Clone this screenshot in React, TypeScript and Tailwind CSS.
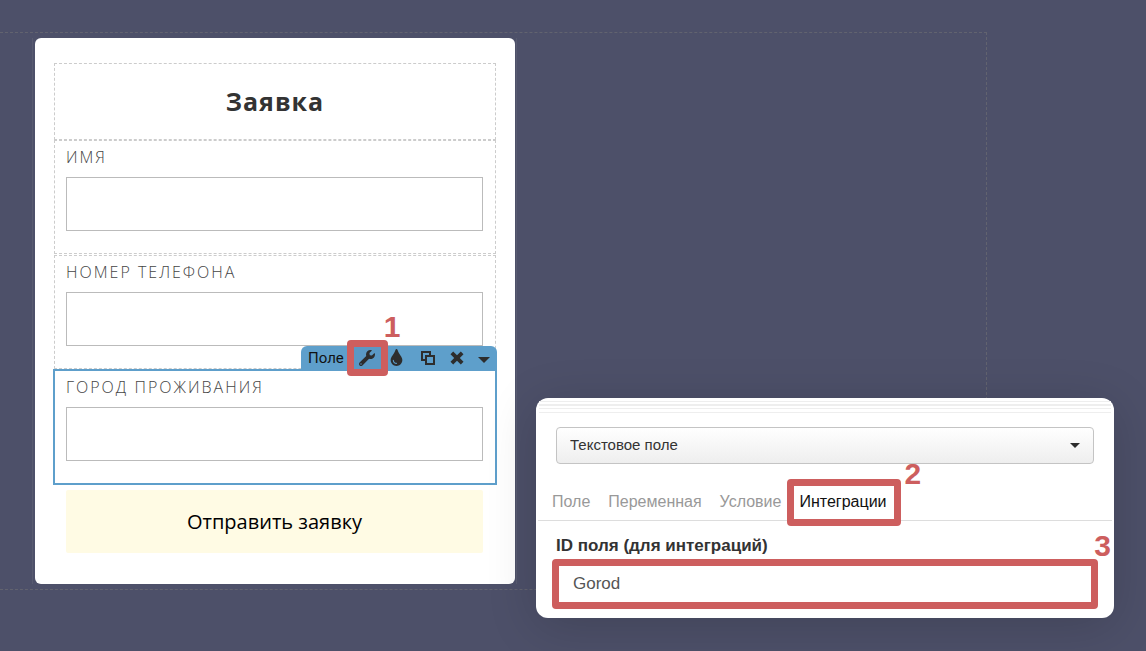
import React from "react";
import { FaTint, FaWrench } from "react-icons/fa";

interface HighlightProps {
  step: number;
  frame: string;
  badge: string;
}

// Red frame with a step number next to it, always laid over its relative parent
function Highlight({ step, frame, badge }: HighlightProps) {
  return (
    <>
      <span className={`pointer-events-none absolute rounded-sm border-[7px] border-[#cd5e5e] ${frame}`} />
      <span className={`pointer-events-none absolute font-['Liberation_Sans',Arial,sans-serif] text-[30px] leading-[30px] font-bold text-[#cd5e5e] ${badge}`}>
        {step}
      </span>
    </>
  );
}

interface FormFieldProps {
  id: string;
  label: string;
}

function FormField({ id, label }: FormFieldProps) {
  return (
    <>
      <label htmlFor={id} className="block pt-[5px] pb-[9px] text-base leading-[22px] font-light tracking-[2px] text-[#444] uppercase">
        {label}
      </label>
      <input id={id} type="text" className="block h-[54px] w-full border border-[#bbb] bg-white px-3 outline-none" />
    </>
  );
}

function Caret({ className }: { className: string }) {
  return (
    <svg viewBox="0 0 12 6" className={className} aria-hidden="true">
      <path d="M0 0h12L6 6z" fill="currentColor" />
    </svg>
  );
}

function CopyIcon() {
  return (
    <svg width="16" height="16" viewBox="0 0 16 16" fill="none" stroke="currentColor" strokeWidth="2" aria-hidden="true">
      <path d="M5 10H2V2h8v3" />
      <path d="M6 6h8v8H6z" />
    </svg>
  );
}

function CrossIcon() {
  return (
    <svg width="14" height="14" viewBox="0 0 14 14" fill="currentColor" aria-hidden="true">
      <path d="M3.2 0.6 7 4.2l3.8-3.6 2.7 2.6L9.8 7l3.7 3.8-2.7 2.6L7 9.8l-3.8 3.6-2.7-2.6L4.2 7 .5 3.2z" />
    </svg>
  );
}

function FieldToolbar() {
  return (
    <div className="absolute -right-0.5 bottom-full flex h-[25px] w-49 items-center rounded-t-md bg-[#5e9fcb] pb-0.5 pl-[7px] text-[#2d2d2d]">
      <span className="font-[Roboto,sans-serif] text-[15px] leading-6 text-[#111]">Поле</span>
      <div className="relative ml-[3px] flex h-6 w-[41px] items-center justify-center">
        <button type="button" aria-label="Настройки" className="flex h-6 w-7 items-center justify-center bg-[#5a98c4]">
          <FaWrench size={16} />
        </button>
        <Highlight step={1} frame="-inset-y-1.5 inset-x-0" badge="-top-[34px] left-[37px]" />
      </div>
      <button type="button" aria-label="Цвет" className="flex w-[18px] justify-center">
        <FaTint size={17} />
      </button>
      <button type="button" aria-label="Копировать" className="ml-3.5">
        <CopyIcon />
      </button>
      <button type="button" aria-label="Удалить" className="ml-3.5">
        <CrossIcon />
      </button>
      <button type="button" aria-label="Ещё" className="mt-1 ml-3.5">
        <Caret className="h-1.5 w-3" />
      </button>
    </div>
  );
}

function RequestForm() {
  return (
    <form className="w-120 rounded-md bg-white px-[19px] pt-[25px] pb-[31px] font-['Open_Sans',sans-serif]">
      <div className="border border-dashed border-[#ccc] py-5 text-center">
        <h1 className="text-[25px] leading-[35px] font-bold tracking-[1px] text-[#333]">Заявка</h1>
      </div>
      <div className="mb-px border border-dashed border-[#ccc] pr-3 pb-[22px] pl-[11px]">
        <FormField id="name" label="Имя" />
      </div>
      <div className="border border-dashed border-[#ccc] pr-3 pb-[22px] pl-[11px]">
        <FormField id="phone" label="Номер телефона" />
      </div>
      <div className="relative -mx-px border-2 border-[#5e9fcb] pr-3 pb-[22px] pl-[11px]">
        <FieldToolbar />
        <FormField id="city" label="Город проживания" />
      </div>
      <button type="button" className="mt-[5px] ml-3 block h-[63px] w-[417px] rounded-xs bg-[#fffbe4] text-xl text-black">
        Отправить заявку
      </button>
    </form>
  );
}

const tabs = ["Поле", "Переменная", "Условие", "Интеграции"];

function SettingsPanel() {
  return (
    <aside className="absolute top-[398px] right-8 w-[578px] rounded-xl bg-white pb-[9px] font-['Liberation_Sans',Arial,sans-serif] shadow-[0_8px_50px_rgba(0,0,0,0.16)]">
      {/* drag handle */}
      <div className="mx-[3px] flex cursor-move flex-col pt-[3px]">
        <div className="h-px bg-[#eee]" />
        <div className="mt-0.5 h-0.5 bg-[#eee]" />
        <div className="mt-0.5 h-px bg-[#eee]" />
        <div className="mt-[3px] h-px bg-[#eee]" />
      </div>

      <div className="relative mx-5 mt-3.5">
        <select
          aria-label="Тип поля"
          className="block h-[37px] w-full appearance-none rounded-sm border border-[#c4c4c4] bg-linear-to-b from-white to-[#eee] px-[13px] text-[15px] text-[#333]"
        >
          <option>Текстовое поле</option>
        </select>
        <Caret className="pointer-events-none absolute top-4 right-3.5 h-[5px] w-2.5 text-[#2d2d2d]" />
      </div>

      <div role="tablist" className="mx-0.5 mt-[15px] flex h-[42px] gap-[18px] border-b border-[#ddd] pl-3.5 text-base">
        {tabs.map((tab) =>
          tab === "Интеграции" ? (
            <div key={tab} className="relative flex">
              <button type="button" role="tab" aria-selected="true" className="pt-1 text-[#111]">
                {tab}
              </button>
              <Highlight step={2} frame="-left-3 -right-3.5 top-0 -bottom-1.5" badge="-top-5 left-full ml-[18px]" />
            </div>
          ) : (
            <button key={tab} type="button" role="tab" aria-selected="false" className="pt-1 text-[#999]">
              {tab}
            </button>
          )
        )}
      </div>

      <div className="px-4 pt-[13px]">
        <label htmlFor="integration-id" className="ml-1 block text-[17px] leading-6 font-bold text-[#333]">
          ID поля (для интеграций)
        </label>
        <div className="relative mt-px">
          <input
            id="integration-id"
            type="text"
            defaultValue="Gorod"
            className="block h-[50px] w-full px-[21px] pb-px text-[17px] text-[#555] outline-none"
          />
          <Highlight step={3} frame="inset-0" badge="-top-7 -right-[13px]" />
        </div>
      </div>
    </aside>
  );
}

export default function App() {
  return (
    <main className="relative min-h-screen bg-[#4d5069] pt-8 pr-[159px]">
      <section className="border border-l-0 border-dashed border-[#62636f] py-[5px]">
        <div className="ml-8 flex w-fit border-x border-[#585b70] pr-px pl-0.5">
          <RequestForm />
        </div>
      </section>
      <SettingsPanel />
    </main>
  );
}
